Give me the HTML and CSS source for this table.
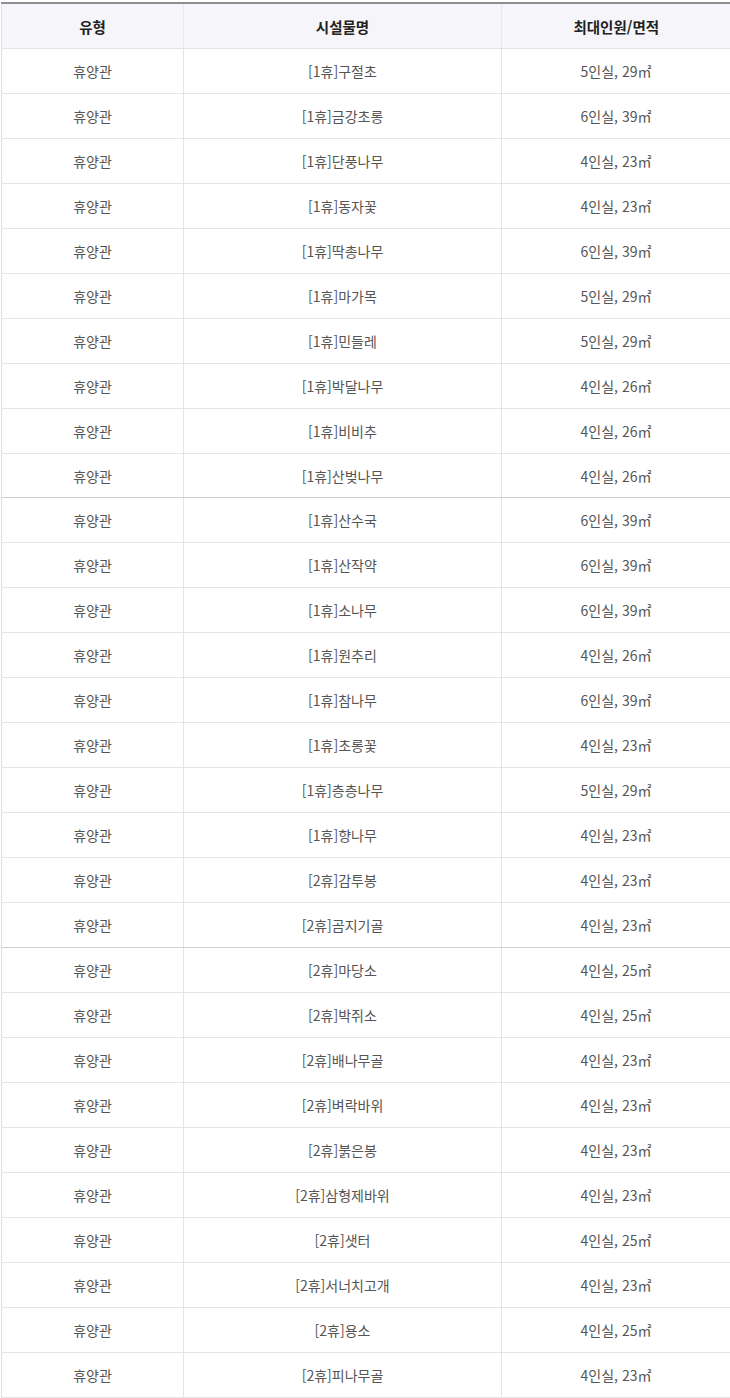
FILE: index.html
```html
<!DOCTYPE html>
<html lang="ko">
<head>
<meta charset="utf-8">
<title>시설물 목록</title>
<link rel="stylesheet" href="styles.css">
</head>
<body>
<div class="wrap">
<table class="facility">
<colgroup><col class="c1"><col class="c2"><col class="c3"></colgroup>
<thead>
<tr><th>유형</th><th>시설물명</th><th>최대인원/면적</th></tr>
</thead>
<tbody>
<tr><td>휴양관</td><td>[1휴]구절초</td><td>5인실, 29㎡</td></tr>
<tr><td>휴양관</td><td>[1휴]금강초롱</td><td>6인실, 39㎡</td></tr>
<tr><td>휴양관</td><td>[1휴]단풍나무</td><td>4인실, 23㎡</td></tr>
<tr><td>휴양관</td><td>[1휴]동자꽃</td><td>4인실, 23㎡</td></tr>
<tr><td>휴양관</td><td>[1휴]딱총나무</td><td>6인실, 39㎡</td></tr>
<tr><td>휴양관</td><td>[1휴]마가목</td><td>5인실, 29㎡</td></tr>
<tr><td>휴양관</td><td>[1휴]민들레</td><td>5인실, 29㎡</td></tr>
<tr><td>휴양관</td><td>[1휴]박달나무</td><td>4인실, 26㎡</td></tr>
<tr><td>휴양관</td><td>[1휴]비비추</td><td>4인실, 26㎡</td></tr>
<tr class="seam short"><td>휴양관</td><td>[1휴]산벚나무</td><td>4인실, 26㎡</td></tr>
<tr><td>휴양관</td><td>[1휴]산수국</td><td>6인실, 39㎡</td></tr>
<tr><td>휴양관</td><td>[1휴]산작약</td><td>6인실, 39㎡</td></tr>
<tr><td>휴양관</td><td>[1휴]소나무</td><td>6인실, 39㎡</td></tr>
<tr><td>휴양관</td><td>[1휴]원추리</td><td>4인실, 26㎡</td></tr>
<tr><td>휴양관</td><td>[1휴]참나무</td><td>6인실, 39㎡</td></tr>
<tr><td>휴양관</td><td>[1휴]초롱꽃</td><td>4인실, 23㎡</td></tr>
<tr><td>휴양관</td><td>[1휴]층층나무</td><td>5인실, 29㎡</td></tr>
<tr><td>휴양관</td><td>[1휴]향나무</td><td>4인실, 23㎡</td></tr>
<tr><td>휴양관</td><td>[2휴]감투봉</td><td>4인실, 23㎡</td></tr>
<tr class="seam"><td>휴양관</td><td>[2휴]곰지기골</td><td>4인실, 23㎡</td></tr>
<tr><td>휴양관</td><td>[2휴]마당소</td><td>4인실, 25㎡</td></tr>
<tr><td>휴양관</td><td>[2휴]박쥐소</td><td>4인실, 25㎡</td></tr>
<tr><td>휴양관</td><td>[2휴]배나무골</td><td>4인실, 23㎡</td></tr>
<tr><td>휴양관</td><td>[2휴]벼락바위</td><td>4인실, 23㎡</td></tr>
<tr><td>휴양관</td><td>[2휴]붉은봉</td><td>4인실, 23㎡</td></tr>
<tr><td>휴양관</td><td>[2휴]삼형제바위</td><td>4인실, 23㎡</td></tr>
<tr><td>휴양관</td><td>[2휴]샛터</td><td>4인실, 25㎡</td></tr>
<tr><td>휴양관</td><td>[2휴]서너치고개</td><td>4인실, 23㎡</td></tr>
<tr><td>휴양관</td><td>[2휴]용소</td><td>4인실, 25㎡</td></tr>
<tr><td>휴양관</td><td>[2휴]피나무골</td><td>4인실, 23㎡</td></tr>
</tbody>
</table>
</div>
</body>
</html>
```
FILE: styles.css
```css
html, body {
  margin: 0;
  padding: 0;
  background: #fff;
}
body {
  font-family: "Noto Sans CJK KR", "Noto Sans", sans-serif;
  color: #555;
}
.wrap {
  padding-top: 2px;
}
.facility {
  width: 729px;
  margin-left: 1px;
  border-collapse: collapse;
  table-layout: fixed;
  border-top: 2px solid #8f8f8f;
}
.c1 { width: 182px; }
.c2 { width: 318px; }
.c3 { width: 229px; }
.facility th {
  height: 44px;
  padding: 0;
  background: #f6f6fa;
  color: #222;
  font-size: 14.5px;
  font-weight: 700;
  text-align: center;
  border-bottom: 1px solid #e3e3e3;
  border-left: 1px solid #e8e8ee;
}
.facility th:first-child {
  border-left: 1px solid #e0e0e0;
}
.facility td {
  height: 44px;
  padding: 0;
  font-size: 14px;
  text-align: center;
  color: #555;
  border-bottom: 1px solid #e5e5e5;
  border-left: 1px solid #e5e5e5;
}
.facility td:first-child {
  border-left: 1px solid #e0e0e0;
}
.facility td:last-child {
  border-right: 1px solid #e5e5e5;
}
.facility tr.seam td {
  border-bottom: 1px solid #cfcfcf;
}
.facility tr.short td {
  height: 43px;
}
```
